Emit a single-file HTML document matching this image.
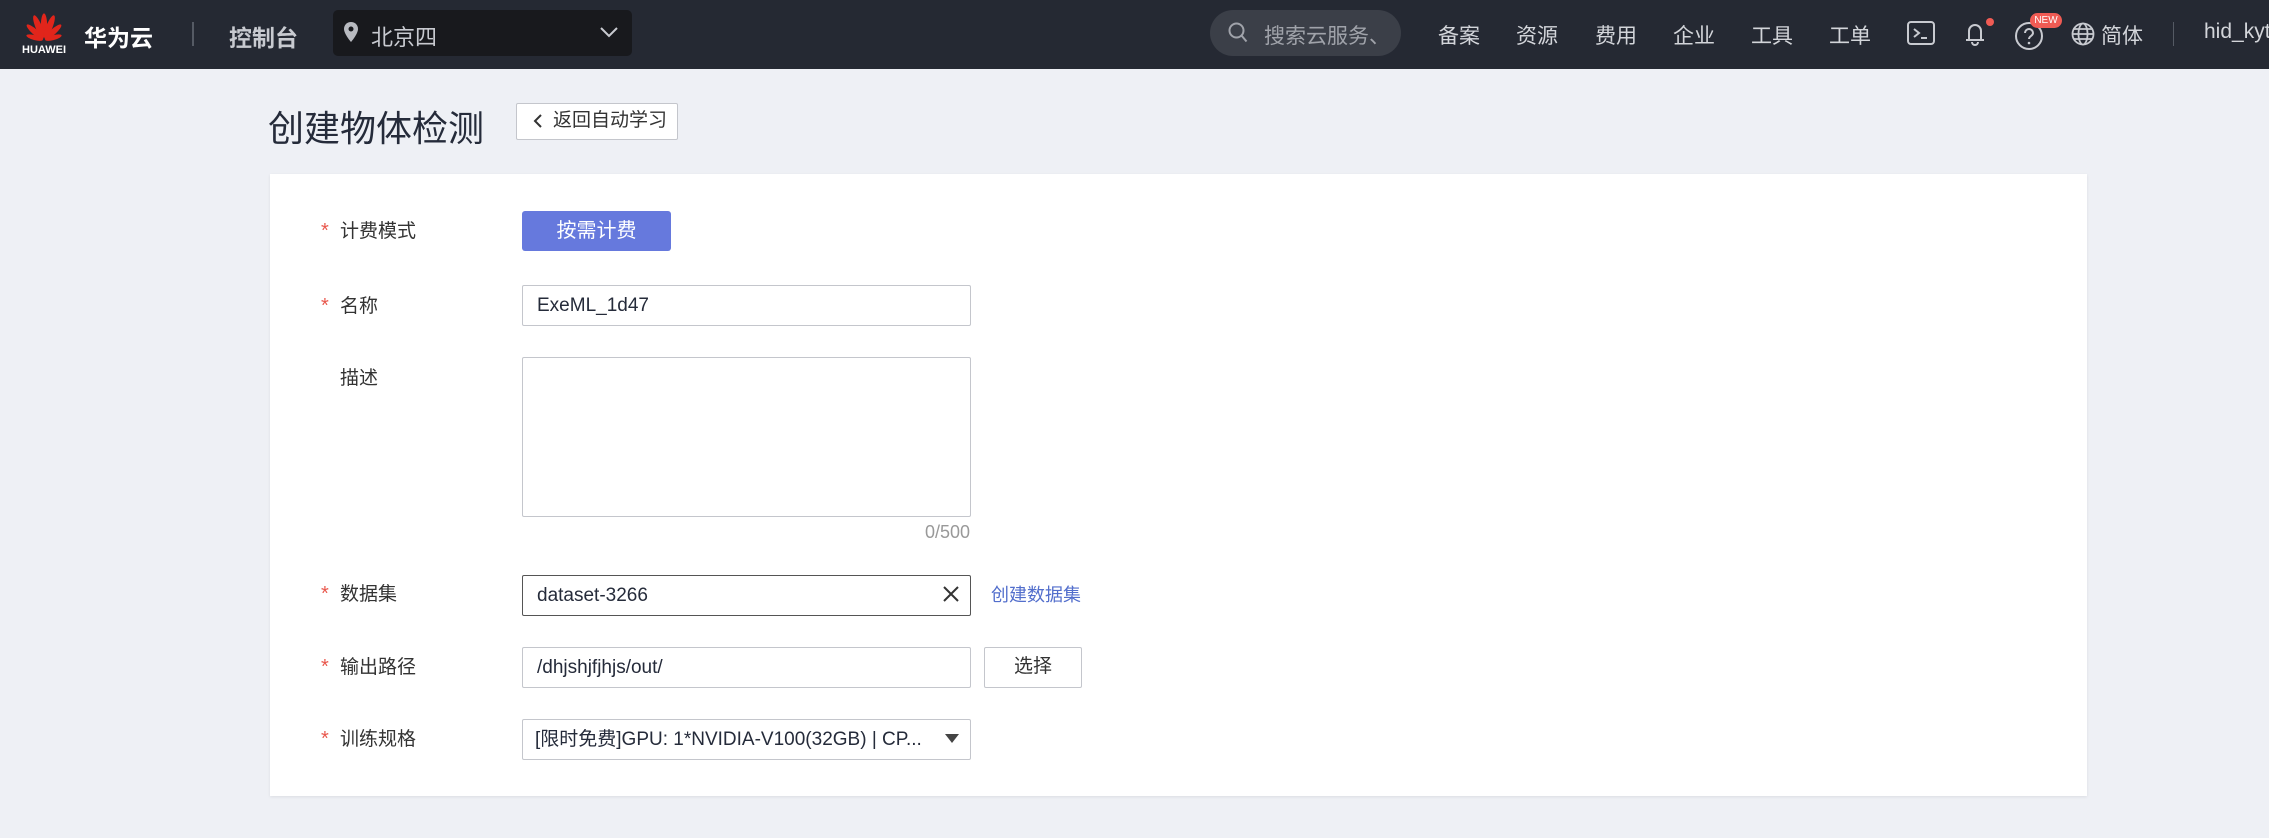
<!DOCTYPE html>
<html><head><meta charset="utf-8"><style>
*{box-sizing:border-box;margin:0;padding:0}
body{width:2269px;height:838px;background:#eef0f5;font-family:"Liberation Sans","Noto Sans CJK SC",sans-serif;position:relative;overflow:hidden}
.hd{position:absolute;left:0;top:0;width:2269px;height:69px;background:#252933}
.a{position:absolute;white-space:nowrap}
.nav{color:#d3d5da;font-size:21px;top:20px}
.lbl{font-size:19px;color:#333;}
.star{color:#e9574c;font-size:20px}
.inp{position:absolute;left:522px;width:449px;background:#fff;border:1.5px solid #c4c6cc;border-radius:2px;font-size:19px;color:#252b3a;padding-left:14px}
</style></head><body>
<div class="hd">
<svg class="a" style="left:24px;top:11px" width="40" height="34" viewBox="0 0 32 28">
<g fill="#e1251b">
<ellipse cx="16" cy="12" rx="2.6" ry="10"/>
<ellipse cx="16" cy="12" rx="2.6" ry="10" transform="rotate(-22 16 24)"/>
<ellipse cx="16" cy="12" rx="2.6" ry="10" transform="rotate(22 16 24)"/>
<ellipse cx="16" cy="14" rx="2.4" ry="9" transform="rotate(-48 16 24)"/>
<ellipse cx="16" cy="14" rx="2.4" ry="9" transform="rotate(48 16 24)"/>
<ellipse cx="16" cy="16" rx="2" ry="7" transform="rotate(-75 16 24)"/>
<ellipse cx="16" cy="16" rx="2" ry="7" transform="rotate(75 16 24)"/>
</g></svg>
<div class="a" style="left:22px;top:44px;font-size:11px;color:#fff;font-weight:bold">HUAWEI</div>
<div class="a" style="left:84px;top:19px;font-size:23px;color:#fff;font-weight:bold">华为云</div>
<div class="a" style="left:192px;top:22px;width:2px;height:24px;background:#555a64"></div>
<div class="a" style="left:229px;top:19px;font-size:23px;color:#c8cad0;font-weight:bold">控制台</div>
<div class="a" style="left:333px;top:10px;width:299px;height:46px;background:#18191d;border-radius:5px"></div>
<svg class="a" style="left:344px;top:22px" width="14" height="20" viewBox="0 0 14 20"><path d="M7 0C3 0 0 3 0 7c0 5 7 13 7 13s7-8 7-13C14 3 11 0 7 0z" fill="#b8bac0"/><circle cx="7" cy="7" r="2.5" fill="#18191d"/></svg>
<div class="a" style="left:371px;top:20px;font-size:22px;color:#c8cad0">北京四</div>
<svg class="a" style="left:600px;top:27px" width="18" height="11"><path d="M1 1l8 8 8-8" stroke="#c8cad0" stroke-width="2" fill="none"/></svg>
<div class="a" style="left:1210px;top:10px;width:191px;height:46px;background:#3b3f48;border-radius:23px"></div>
<svg class="a" style="left:1228px;top:22px" width="20" height="22"><circle cx="8.5" cy="8.5" r="7" stroke="#a0a3aa" stroke-width="2" fill="none"/><path d="M13.5 13.5l5 6" stroke="#a0a3aa" stroke-width="2"/></svg>
<div class="a" style="left:1264px;top:20px;font-size:21px;color:#a0a3aa">搜索云服务、</div>
<div class="a nav" style="left:1438px">备案</div>
<div class="a nav" style="left:1516px">资源</div>
<div class="a nav" style="left:1595px">费用</div>
<div class="a nav" style="left:1673px">企业</div>
<div class="a nav" style="left:1751px">工具</div>
<div class="a nav" style="left:1829px">工单</div>
<svg class="a" style="left:1907px;top:21px" width="28" height="24"><rect x="1" y="1" width="26" height="22" rx="3" stroke="#c8cad0" stroke-width="2" fill="none"/><path d="M7 8l5 4-5 4M14 17h6" stroke="#c8cad0" stroke-width="2" fill="none"/></svg>
<svg class="a" style="left:1962px;top:17px" width="34" height="30"><path d="M4 23h18M7 23v-9a6 6 0 0112 0v9" stroke="#c8cad0" stroke-width="2" fill="none"/><path d="M10 25a3 3 0 006 0" stroke="#c8cad0" stroke-width="2" fill="none"/><circle cx="28" cy="5" r="4" fill="#f05b54"/></svg>
<svg class="a" style="left:2014px;top:21px" width="30" height="30"><circle cx="15" cy="15" r="13" stroke="#c8cad0" stroke-width="2" fill="none"/><path d="M11 12a4 4 0 118 0c0 3-4 3-4 6" stroke="#c8cad0" stroke-width="2" fill="none"/><circle cx="15" cy="22" r="1.3" fill="#c8cad0"/></svg>
<div class="a" style="left:2030px;top:13px;width:32px;height:15px;background:#f05b54;border-radius:8px;color:#fff;font-size:10px;text-align:center;line-height:15px">NEW</div>
<svg class="a" style="left:2071px;top:22px" width="24" height="24"><g stroke="#c8cad0" stroke-width="1.8" fill="none"><circle cx="12" cy="12" r="10.5"/><ellipse cx="12" cy="12" rx="4.5" ry="10.5"/><path d="M1.5 12h21M3 7h18M3 17h18"/></g></svg>
<div class="a nav" style="left:2101px">简体</div>
<div class="a" style="left:2173px;top:22px;width:1px;height:24px;background:#555a64"></div>
<div class="a nav" style="left:2204px">hid_kyt</div>
</div>

<div class="a" style="left:268px;top:100px;font-size:36px;color:#252b3a">创建物体检测</div>
<div class="a" style="left:516px;top:103px;width:162px;height:37px;background:#fff;border:1.5px solid #c4c6cc;border-radius:2px;font-size:19px;color:#333;line-height:34px;padding-left:36px">返回自动学习</div>
<svg class="a" style="left:533px;top:113px" width="10" height="16"><path d="M8 2L2 8l6 6" stroke="#333" stroke-width="2" fill="none"/></svg>

<div class="a" style="left:270px;top:174px;width:1817px;height:622px;background:#fff;box-shadow:0 1px 3px rgba(0,0,0,.08)"></div>

<div class="a star" style="left:321px;top:220px">*</div><div class="a lbl" style="left:340px;top:216px">计费模式</div>
<div class="a" style="left:522px;top:211px;width:149px;height:40px;background:#6679dd;border-radius:3px;color:#fff;font-size:20px;text-align:center;line-height:40px">按需计费</div>

<div class="a star" style="left:321px;top:295px">*</div><div class="a lbl" style="left:340px;top:291px">名称</div>
<div class="inp" style="top:285px;height:41px;line-height:40px">ExeML_1d47</div>

<div class="a lbl" style="left:340px;top:363px">描述</div>
<div class="inp" style="top:357px;height:160px"></div>
<div class="a" style="left:925px;top:522px;font-size:18px;color:#999">0/500</div>

<div class="a star" style="left:321px;top:583px">*</div><div class="a lbl" style="left:340px;top:579px">数据集</div>
<div class="inp" style="top:575px;height:41px;line-height:40px;border-color:#555">dataset-3266</div>
<svg class="a" style="left:942px;top:585px" width="18" height="18"><path d="M2 2l14 14M16 2L2 16" stroke="#333" stroke-width="2"/></svg>
<div class="a" style="left:991px;top:581px;font-size:18px;color:#526ecc">创建数据集</div>

<div class="a star" style="left:321px;top:656px">*</div><div class="a lbl" style="left:340px;top:652px">输出路径</div>
<div class="inp" style="top:647px;height:41px;line-height:40px">/dhjshjfjhjs/out/</div>
<div class="a" style="left:984px;top:647px;width:98px;height:41px;border:1.5px solid #c4c6cc;border-radius:2px;font-size:19px;color:#333;text-align:center;line-height:38px">选择</div>

<div class="a star" style="left:321px;top:728px">*</div><div class="a lbl" style="left:340px;top:724px">训练规格</div>
<div class="inp" style="top:719px;height:41px;line-height:40px;padding-left:12px">[限时免费]GPU: 1*NVIDIA-V100(32GB) | CP...</div>
<svg class="a" style="left:945px;top:734px" width="14" height="10"><path d="M0 0h14L7 9z" fill="#444"/></svg>
</body></html>
